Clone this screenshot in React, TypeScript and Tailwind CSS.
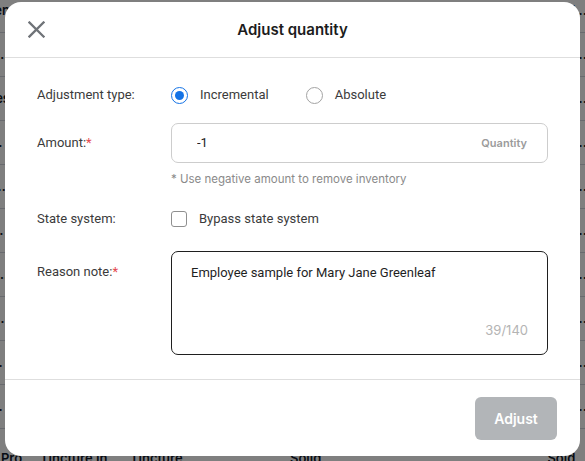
import { useState } from 'react';

const rows = [
  ['Vape Pen', 'Sold ...'],
  ['Tincture 1:1', 'Sold ...'],
  ['Gummies', 'Sold ...'],
  ['Pre-roll Pack', 'Sold ...'],
  ['Topical Balm', 'Sold ...'],
  ['Sativa Vape', 'Sold ...'],
  ['Live Resin Cart', 'Sold ...'],
  ['Chocolate Bar', 'Sold ...'],
  ['Pure CBD Oil', 'Sold ...'],
  ['Indica Vape', 'Sold ...'],
];

export default function App() {
  const [mode, setMode] = useState<'inc' | 'abs'>('inc');
  const [bypass, setBypass] = useState(false);
  const [note, setNote] = useState('Employee sample for Mary Jane Greenleaf');

  return (
    <div className="relative h-[461px] w-full overflow-hidden bg-white font-['Inter',sans-serif]">
      {/* table behind the dialog */}
      <div className="-mt-[11px] flex flex-col">
        {rows.map((r) => (
          <div
            key={r[0]}
            className="flex h-[44px] items-center justify-between border-b border-gray-300 text-[13px] font-semibold text-gray-900"
          >
            <span className="-ml-[60px] w-[70px] truncate text-right">{r[0]}</span>
            <span className="-mr-[6px]">{r[1]}</span>
          </div>
        ))}
        <div className="grid h-[44px] grid-cols-[40px_90px_160px_250px_1fr] items-start pt-[20px] text-[13px] font-semibold text-gray-900">
          <span className="-ml-[10px]">e Pro</span>
          <span>Tincture In...</span>
          <span>Tincture</span>
          <span>Solid</span>
          <span className="-mr-[6px] text-right">Sold ...</span>
        </div>
      </div>
      <div className="absolute inset-0 bg-black/50" />

      {/* dialog */}
      <div className="absolute left-[5px] top-[2px] flex h-[454px] w-[575px] flex-col rounded-[16px] bg-white">
        <div className="relative flex h-[56px] items-center justify-center border-b border-[#dedede] pt-[2px]">
          <button className="absolute left-[19px] top-[15px] p-[4px] text-[#6f7378]" aria-label="Close">
            <svg width="17" height="17" viewBox="0 0 17 17" fill="none" stroke="currentColor" strokeWidth="2.3" strokeLinecap="square">
              <path d="M1.5 1.5L15.5 15.5M15.5 1.5L1.5 15.5" />
            </svg>
          </button>
          <h2 className="text-[15px] font-semibold text-[#1c1c1c]">Adjust quantity</h2>
        </div>

        <div className="grid grid-cols-[134px_1fr] px-[32px] pb-[24px] pt-[25px] font-['Roboto',sans-serif] text-[13px] text-[#3b3b3b]">
          <div className="flex h-[24px] items-center">Adjustment type:</div>
          <div className="flex h-[24px] items-center gap-[37px]">
            <label className="flex cursor-pointer items-center gap-[12px]" onClick={() => setMode('inc')}>
              <span className={`flex h-[17px] w-[17px] items-center justify-center rounded-full border-[1.5px] ${mode === 'inc' ? 'border-[#1473e6]' : 'border-[#a3a3a3]'}`}>
                {mode === 'inc' && <span className="h-[9px] w-[9px] rounded-full bg-[#1473e6]" />}
              </span>
              Incremental
            </label>
            <label className="flex cursor-pointer items-center gap-[12px]" onClick={() => setMode('abs')}>
              <span className={`flex h-[17px] w-[17px] items-center justify-center rounded-full border-[1.5px] ${mode === 'abs' ? 'border-[#1473e6]' : 'border-[#a3a3a3]'}`}>
                {mode === 'abs' && <span className="h-[9px] w-[9px] rounded-full bg-[#1473e6]" />}
              </span>
              Absolute
            </label>
          </div>

          <div className="mt-[16px] flex h-[40px] items-center">
            Amount:<span className="text-[#e5484d]">*</span>
          </div>
          <div className="mt-[16px]">
            <div className="flex h-[40px] items-center rounded-[7px] border border-[#cdcdcd] pl-[25px] pr-[20px]">
              <input className="min-w-0 flex-1 bg-transparent text-[13px] text-[#222] outline-none" defaultValue="-1" />
              <span className="font-['Inter',sans-serif] text-[11px] font-semibold text-[#9b9b9b]">Quantity</span>
            </div>
            <p className="mt-[8px] font-['Inter',sans-serif] text-[11.5px] leading-[16px] text-[#8a8a8a]">* Use negative amount to remove inventory</p>
          </div>

          <div className="mt-[20px] flex h-[24px] items-center">State system:</div>
          <div className="mt-[20px] flex h-[24px] items-center">
            <label className="flex cursor-pointer items-center gap-[12px]" onClick={() => setBypass(!bypass)}>
              <span className={`flex h-[16px] w-[16px] items-center justify-center rounded-[3px] border ${bypass ? 'border-[#1473e6] bg-[#1473e6]' : 'border-[#8f8f8f]'}`} />
              Bypass state system
            </label>
          </div>

          <div className="mt-[31px]">
            Reason note:<span className="text-[#e5484d]">*</span>
          </div>
          <div className="relative mt-[20px]">
            <textarea
              value={note}
              onChange={(e) => setNote(e.target.value.slice(0, 140))}
              className="block h-[104px] w-full resize-none rounded-[7px] border border-[#1f1f1f] px-[19px] pt-[11px] text-[13px] leading-[20px] text-[#1f1f1f] outline-none"
            />
            <span className="absolute bottom-[15px] right-[20px] font-['Inter',sans-serif] text-[13px] text-[#b4b4b4]">{note.length}/140</span>
          </div>
        </div>

        <div className="flex flex-1 items-center justify-end border-t border-[#dedede] pr-[23px]">
          <button className="h-[43px] w-[82px] rounded-[6px] bg-[#b2b5b8] text-[14px] font-semibold text-white">Adjust</button>
        </div>
      </div>
    </div>
  );
}
